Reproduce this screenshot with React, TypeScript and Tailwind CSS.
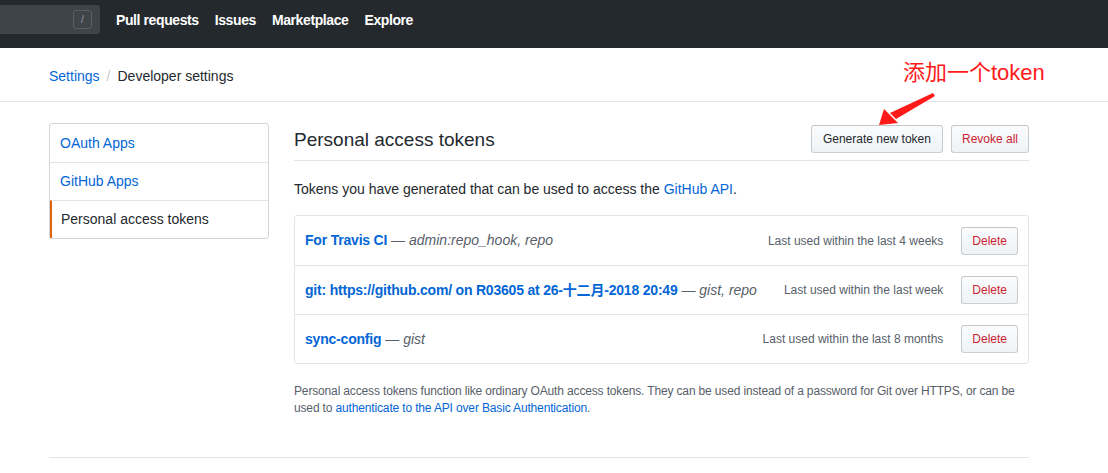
import React from 'react';

interface Token {
  name: string;
  scopes: string;
  lastUsed: string;
}

const tokens: Token[] = [
  { name: 'For Travis CI', scopes: 'admin:repo_hook, repo', lastUsed: 'Last used within the last 4 weeks' },
  { name: 'git: https://github.com/ on R03605 at 26-十二月-2018 20:49', scopes: 'gist, repo', lastUsed: 'Last used within the last week' },
  { name: 'sync-config', scopes: 'gist', lastUsed: 'Last used within the last 8 months' },
];

const font = { fontFamily: '"Liberation Sans", "Noto Sans CJK SC", sans-serif' };

function SmallButton({ label, danger, wide }: { label: string; danger?: boolean; wide?: boolean }) {
  return (
    <button
      className={`h-7 rounded-[3px] border border-[rgba(27,31,35,0.2)] bg-gradient-to-b from-[#fafbfc] to-[#eff3f6] text-[12px] leading-5 ${
        wide ? 'px-[11px]' : 'px-[10px]'
      } ${danger ? 'text-[#cb2431]' : 'text-[#24292e]'}`}
    >
      {label}
    </button>
  );
}

function App() {
  const menu = ['OAuth Apps', 'GitHub Apps', 'Personal access tokens'];

  return (
    <div className="relative min-h-[473px] bg-white text-[#24292e] text-[14px]" style={font}>
      {/* Header */}
      <div className="h-12 bg-[#24292e] pt-[5px]">
        <div className="h-[29px] flex items-center">
          <div className="w-[100px] h-[29px] bg-[#3f4448] rounded-r-[3px] flex items-center justify-end pr-2">
            <div className="w-[19px] h-[19px] border border-[#5a5f64] rounded-[3px] text-[10px] text-[#959da5] flex items-center justify-center">
              /
            </div>
          </div>
          <nav className="flex items-center gap-4 ml-4 text-white font-bold text-[14px] tracking-[-0.4px] pt-[2px]">
            <span>Pull requests</span>
            <span>Issues</span>
            <span>Marketplace</span>
            <span>Explore</span>
          </nav>
        </div>
      </div>

      {/* Breadcrumb */}
      <div className="h-[54px] border-b border-[#e1e4e8] flex items-center pt-1">
        <div className="w-[980px] ml-[49px] flex items-center text-[14px]">
          <span className="text-[#0366d6]">Settings</span>
          <span className="text-[#c6cbd1] mx-[7px]">/</span>
          <span>Developer settings</span>
        </div>
      </div>

      {/* Content */}
      <div className="w-[980px] ml-[49px] pt-[21px] flex gap-[25px]">
        <div className="w-[220px] shrink-0 self-start border border-[#d1d5da] rounded-[3px]">
          {menu.map((item, i) => (
            <div
              key={item}
              className={`h-[38px] flex items-center px-[10px] ${i > 0 ? 'border-t border-[#e1e4e8]' : ''} ${
                i === 2 ? 'border-l-2 border-l-[#e36209] pl-[9px] text-[#24292e]' : 'text-[#0366d6]'
              }`}
            >
              {item}
            </div>
          ))}
        </div>

        <div className="flex-1">
          <div className="h-[38px] border-b border-[#e1e4e8] flex items-center justify-between pb-[6px]">
            <h2 className="text-[19px] font-normal pt-[4px]">Personal access tokens</h2>
            <div className="flex gap-2">
              <SmallButton label="Generate new token" wide />
              <SmallButton label="Revoke all" danger />
            </div>
          </div>

          <p className="mt-[18px] leading-5">
            Tokens you have generated that can be used to access the{' '}
            <span className="text-[#0366d6]">GitHub API</span>.
          </p>

          <div className="mt-[16px] border border-[#e1e4e8] rounded-[3px]">
            {tokens.map((t, i) => (
              <div
                key={t.name}
                className={`h-[49px] flex items-center justify-between px-[10px] ${i > 0 ? 'border-t border-[#e1e4e8]' : ''}`}
              >
                <div>
                  <span className="text-[#0366d6] font-bold tracking-[-0.2px]">{t.name}</span>
                  <span className="text-[#586069]"> — <em>{t.scopes}</em></span>
                </div>
                <div className="flex items-center gap-[18px]">
                  <span className="text-[12px] text-[#586069]">{t.lastUsed}</span>
                  <SmallButton label="Delete" danger />
                </div>
              </div>
            ))}
          </div>

          <p className="mt-[19px] text-[12px] leading-[17px] tracking-[-0.15px] text-[#586069]">
            Personal access tokens function like ordinary OAuth access tokens. They can be used instead of a password for Git over HTTPS, or can be
            used to <span className="text-[#0366d6]">authenticate to the API over Basic Authentication</span>.
          </p>
        </div>
      </div>

      <div className="w-[980px] ml-[49px] mt-[40px] border-t border-[#e1e4e8]" />

      {/* Annotation */}
      <div className="absolute left-[903px] top-[60px] text-[22px] text-[#ff1a1a] leading-[26px]">添加一个token</div>
      <svg className="absolute left-[870px] top-[88px]" width="75" height="42" viewBox="0 0 75 42">
        <polygon points="63,5 65,8 26,31 20,25" fill="#ff1a1a" />
        <polygon points="9,37 14,21 28,35" fill="#ff1a1a" />
      </svg>
    </div>
  );
}

export default App;
